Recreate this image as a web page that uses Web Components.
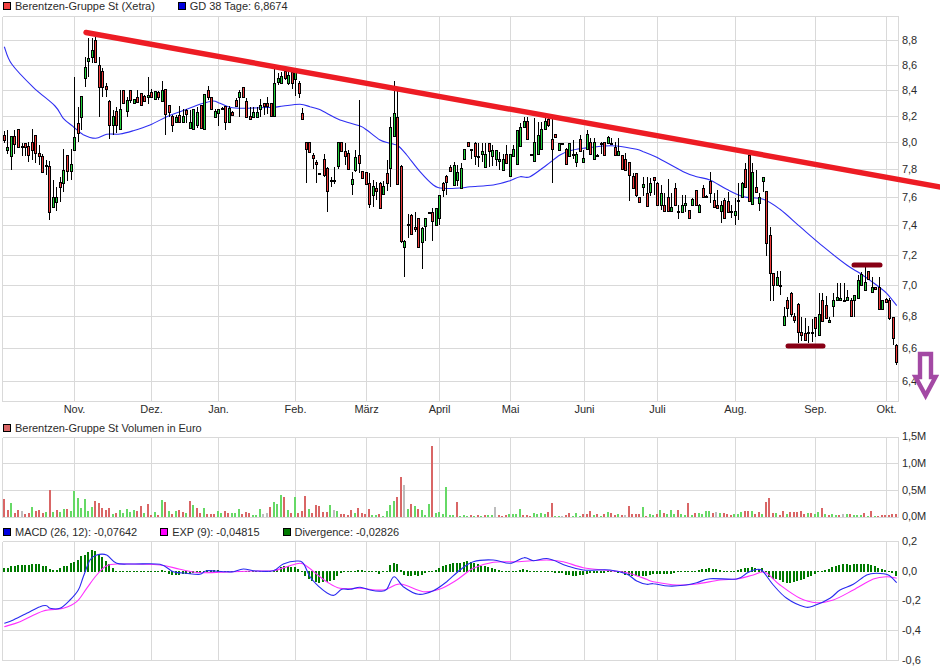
<!DOCTYPE html>
<html lang="de">
<head>
<meta charset="utf-8">
<title>Berentzen-Gruppe St</title>
<style>
  body { margin: 0; background: #fff; color: #2b2b2b; font: 11px "Liberation Sans", Arial, sans-serif; }
  main { display: flex; flex-direction: column; width: 940px; height: 666px; overflow: hidden; }
</style>
</head>
<body>
<main>
  <stock-legend rows="12">
    <legend-item color="#f04040">Berentzen-Gruppe St (Xetra)</legend-item>
    <legend-item color="#0000e0">GD 38 Tage: 6,8674</legend-item>
  </stock-legend>
  <price-chart></price-chart>
  <stock-legend rows="9">
    <legend-item color="#d96666">Berentzen-Gruppe St Volumen in Euro</legend-item>
  </stock-legend>
  <volume-chart></volume-chart>
  <stock-legend rows="9">
    <legend-item color="#0000e0">MACD (26, 12): -0,07642</legend-item>
    <legend-item color="#ff00ff">EXP (9): -0,04815</legend-item>
    <legend-item color="#007a00">Divergence: -0,02826</legend-item>
  </stock-legend>
  <macd-chart></macd-chart>
</main>

<script>
// all values below are read off the chart: x y pairs at 3x, with the crop origin in front
const MONTHS = [["Nov.",74.5],["Dez.",151.5],["Jan.",218.5],["Feb.",295.5],["März",366.5],["April",439.5],["Mai",510.5],["Juni",584.5],["Juli",657.5],["Aug.",735.5],["Sep.",815.5],["Okt.",886.5]];
const GRID_X = MONTHS.map(m => m[1]);

// x high top bottom low colour
const CANDLES = [
[0, 0, `13 392 405 420 428 r,22 390 441 449 462 g,34 408 408 467 510 g,43 390 408 432 462 r,55 388 388 440 440 r,65 430 438 440 468 r,76 430 430 440 468 r,85 425 438 465 485 r,97 388 426 450 480 r,106 405 405 458 488 r,118 435 460 467 495 r,127 462 467 515 515 r,139 480 496 498 525 r,148 483 498 635 660 r,159 540 590 620 620 g,169 560 592 607 632 g,181 530 547 560 605 r,190 448 511 550 575 g,202 465 465 513 542 r,214 448 492 513 540 g,223 232 412 449 449 g,235 320 370 398 425 r,244 289 289 352 390 g,256 170 202 235 262 g,265 113 175 183 230 g,277 113 150 170 190 g,286 110 120 185 185 r,298 172 196 260 350 r,307 205 213 262 290 r,319 250 258 266 290 r,328 300 304 374 418 r,340 330 349 376 406 g,349 320 333 374 400 r,361 270 328 388 388 g,370 270 271 310 310 r,382 290 300 332 350 g,391 270 271 300 310 r,403 296 298 308 310 g,412 270 291 306 308 r,424 278 278 316 316 r,433 285 288 302 305 r,445 232 286 292 312 g,454 268 277 291 295 r,466 272 274 298 298 g,475 272 276 290 300 r,487 243 270 302 302 g,496 268 268 343 406 r,508 316 316 335 352 r,517 345 348 376 395 r,529 345 350 366 368 g,538 318 345 366 368 r,550 328 348 365 368 g,559 328 330 342 368 r,571 330 366 383 385 g,580 328 328 388 390 g,592 320 337 374 385 g,604 316 316 383 385 r,613 283 283 388 390 g,625 258 270 290 300 r,634 290 290 328 328 r,646 328 332 350 352 g,655 328 328 338 378 g,667 320 325 328 330 r,676 318 318 365 390 r,688 318 325 367 370 g,697 333 337 344 346 r,709 295 300 318 320 r,718 270 277 290 350 g,730 262 262 290 290 r,739 295 304 350 352 r,751 320 348 356 358 r,760 320 337 350 352 g,772 320 337 352 354 g,781 297 316 326 350 g,793 308 310 318 345 r,802 292 310 317 342 r,814 310 310 349 350 r,823 207 250 349 350 g,835 218 235 245 255 g,844 216 229 250 250 g,856 210 214 235 240 r,865 210 226 250 255 g,877 205 217 250 268 r,886 210 217 236 288 g,898 243 250 278 293 r,907 325 340 356 360 r,919 425 425 448 550 r,928 425 425 455 458 r,940 458 466 475 508 r,949 480 485 493 550 r,958 519 520 521 522 r`],
[320, 60, `13 282 298 344 350 r,22 320 325 392 455 r,34 352 360 362 382 r,43 320 360 362 372 r,55 247 247 318 328 g,64 247 247 272 272 r,76 248 272 288 315 r,85 270 280 328 330 r,97 335 358 371 405 g,106 270 292 330 335 g,118 120 286 308 340 r,127 332 332 353 355 r,139 337 337 372 372 r,148 340 370 433 444 r,160 360 379 406 440 g,169 365 385 392 420 r,181 365 370 445 445 r,190 362 379 401 403 g,202 300 340 370 392 r,211 172 202 325 380 g,223 63 160 228 228 g,232 90 172 372 372 r,244 315 318 542 548 r,253 540 542 562 650 g,265 462 493 496 535 r,274 462 465 523 525 r,286 455 502 506 515 r,295 475 475 560 562 r,307 500 505 545 627 g,316 475 475 497 542 g,328 455 455 457 458 r,337 445 455 482 542 r,349 445 445 495 497 g,358 405 405 475 495 g,370 365 370 390 412 r,379 345 349 365 405 r,391 315 320 332 335 r,403 305 316 375 378 g,412 315 337 360 378 g,424 308 325 383 385 g,433 268 268 296 296 g,445 247 247 257 258 r,454 267 268 268 297 r,466 247 250 287 315 r,475 250 287 292 320 r,487 250 274 281 305 g,496 250 283 320 320 g,508 250 250 274 320 r,517 255 270 287 318 g,529 270 271 296 318 g,538 275 298 303 330 g,550 282 296 329 330 g,559 255 283 308 308 r,571 282 282 349 350 g,580 255 268 288 290 g,592 210 211 313 315 g,601 190 202 257 258 g,613 172 184 200 202 g,622 172 184 238 240 r,634 281 282 284 285 r,643 175 245 304 305 g,655 185 226 283 284 g,664 185 208 268 270 g,676 170 184 208 210 g,685 170 178 196 200 r,697 178 238 268 370 r,706 222 223 232 234 r,718 250 250 271 272 g,727 249 249 251 252 r,739 265 268 313 314 r,748 250 250 287 288 g,760 240 282 284 297 r,769 275 281 305 320 g,781 225 238 274 276 r,790 270 295 307 309 g,802 210 223 268 270 g,811 235 247 283 285 r,823 235 247 298 300 g,832 283 284 286 287 r,844 247 248 250 283 r,853 247 247 285 286 r,865 228 232 248 250 g,874 235 249 251 255 r,886 245 262 284 285 r,895 235 274 284 285 g,907 285 286 328 330 r,916 280 298 330 330 r,928 307 307 344 422 r,940 340 349 385 387 r,949 340 340 406 412 r,958 411 411 425 426 r`],
[640, 130, `8 140 163 170 198 g,20 140 190 228 228 r,31 145 160 186 197 g,43 140 142 150 195 r,52 155 158 224 224 r,64 165 190 224 240 g,73 190 224 243 245 r,85 148 202 243 245 r,94 190 232 243 245 g,106 160 175 224 226 r,115 225 243 245 267 r,127 195 224 245 247 g,136 195 218 225 245 g,148 240 241 265 267 r,157 204 206 224 226 g,169 180 181 226 228 r,178 222 224 245 247 g,190 165 175 202 204 r,199 196 197 199 205 r,211 127 153 190 220 r,223 190 211 232 234 r,232 180 226 233 235 r,244 212 224 244 278 g,253 205 211 263 265 r,265 185 213 245 247 r,274 225 244 246 265 r,286 205 244 254 285 g,295 160 210 212 270 r,307 155 160 202 204 g,316 100 118 172 174 r,328 75 75 214 216 r,337 98 127 223 225 g,349 120 172 185 187 r,358 190 202 218 242 g,370 140 140 154 186 g,379 184 184 340 378 r,391 292 316 430 512 r,400 430 430 466 513 r,412 424 442 466 468 g,421 424 465 467 495 r,433 530 559 586 588 g,442 500 511 535 560 r,454 487 488 553 562 r,463 550 559 569 580 r,475 520 521 607 640 r,484 560 607 616 632 r,496 565 610 631 632 r,505 588 607 609 640 r,517 568 605 609 635 r,526 562 562 595 622 r,538 488 553 616 618 g,547 488 511 574 576 r,559 498 526 565 567 r,568 560 570 577 579 g,580 488 511 527 560 g,592 458 502 511 512 g,601 458 505 511 512 g,613 460 509 511 512 g,622 480 502 511 512 g,634 505 511 559 560 r,643 495 496 509 560 g,655 435 451 503 505 g,664 425 433 466 468 g,676 412 457 480 482 g,685 424 424 448 450 r,697 440 470 485 487 g,706 470 470 478 480 r,718 440 470 536 538 r,727 510 511 536 538 g,739 505 508 515 517 r,748 505 511 563 569 r,760 560 562 625 645 r,769 642 644 695 705 r`]
];

// volume bars: colour + height at 3x
const VOLUME = [
[4.3, 319.3, "r54 r21 g42 r12 r21 s18 r10 r12 g30 r18 r21 r12 g15 r81 g14 r21 g15 g24 r24 g18 g78 g57 g27 g54 g18 g30 r48 r42 r27 r21 r27 g9 r11 g21 g12 g24 g15 g21 r18 r33 g12 r39 r6 g15 r6 g51 r45 g18 r9 g18 r21 r15 g12 r48 g36 r27 r12 g27 r9 r9 r9 g18 g12 r18 r12 g12 g12 g24 r9 r15 r12 g6 g6 g24 s9 s12 r30 g45 g39 g66 r60 g21 r12 g60 r12 r18 r63 g24 r12 r36 r33"],
[323.3, 639.3, "r15 r15 g36 s21 g18 r9 r9 r6 r21 g12 r27 r12 r9 r24 g6 g6 r9 g3 g18 g36 g48 r60 r120 s96 g24 r39 g33 r24 g21 g6 g39 r213 g12 g15 g9 g90 g6 g6 r45 g3 g6 g3 r6 g3 r6 g3 r6 g6 g6 s30 r6 r3 r6 g9 g9 g9 g24 r6 r6 r3 g12 g9 g12 g9 r15 r42 g3 g3 s3 r6 r12 g3 g12 g3 r9 r9 r18 g6 r9 g3 r9 g15 r12 r6 g9 r6 s6 r33 r9 r9 r9"],
[642.7, 895.7, "g30 r3 g9 g6 r9 g21 r12 g9 g21 g9 r21 g9 g6 r42 g6 r12 g12 g9 g18 g18 r12 s15 g12 r12 r9 r6 g9 g9 g15 r18 r18 g18 r9 r15 g9 r45 r57 r12 g12 r6 r18 g9 r15 r15 r15 r18 r9 g12 r12 g9 g15 r27 g9 r6 g9 g6 r6 s9 g9 r9 g6 g6 g6 r12 g3 r18 g3 r3 r6 r6 r6 r9 r9"]
];

// MACD divergence bars: height at 3x, negative below the zero line
const DIVERGENCE = [
[4.3, 319.3, "12 12 18 18 21 21 21 21 24 24 24 18 18 9 6 6 12 18 18 27 30 36 48 51 60 66 63 54 45 33 24 12 3 3 2 2 2 2 3 -3 -3 2 2 2 2 6 -3 -9 -12 -12 -12 -9 -9 -9 -6 -6 -6 3 6 6 6 6 3 2 2 2 2 2 3 3 2 2 2 2 2 2 2 3 9 15 18 18 15 15 9 3 -15 -24 -30 -33 -36"],
[323.3, 639.3, "-33 -33 -30 -27 -15 -6 -3 -3 -3 3 6 6 -2 -2 -3 -3 -9 -3 3 20 28 24 6 -12 -15 -15 -12 -15 -12 -6 -2 3 6 12 18 21 24 27 27 27 30 33 30 27 24 18 18 15 12 9 6 3 2 2 2 3 6 9 6 2 2 2 2 3 3 -3 -6 -6 -6 -12 -12 -15 -15 -12 -12 -9 -6 -6 -6 -6 -6 -3 -2 -3 -6 -6 -12 -12 -15 -15 -15"],
[642.7, 895.7, "-15 -15 -12 -9 -9 -9 -9 -9 -9 -6 -3 -2 -2 -2 3 3 6 9 9 12 9 9 6 3 3 3 3 6 9 12 12 15 12 9 12 -3 -18 -24 -24 -27 -33 -36 -36 -33 -30 -27 -24 -18 -15 -9 -2 3 6 9 15 18 21 24 24 21 24 24 24 24 24 21 18 12 9 6 3 -6 -15"]
];

// lines: crop origin, then x y pairs at 3x
const MA_LINE = [
[0, 0, "13 140 35 192 100 262 165 318 190 355 220 380 250 404 287 415 320 403 360 402 400 392 450 375 500 350 540 335 580 320 610 310 640 303 660 310 690 322 730 325 780 323 820 322 850 318 900 313 930 320 957 328"],
[320, 60, "20 160 60 180 120 198 140 210 180 240 210 250 235 258 260 285 300 335 340 375 370 385 430 383 450 380 520 375 570 362 600 350 630 350 680 315 720 285 750 272 790 265 850 258 890 258 950 268"],
[640, 130, "10 65 50 82 130 125 170 140 210 150 260 178 310 200 370 208 420 238 480 290 550 350 620 405 660 430 700 458 740 490 770 527"]
];
const MACD_LINE = [
[0, 400, "13 670 40 660 80 640 120 620 140 617 150 625 180 625 210 600 235 570 250 530 270 480 290 465 320 465 350 490 400 492 480 493 520 515 560 520 600 523 620 512 670 515 700 515 730 507 770 513 820 512 850 492 890 483 910 490 930 530 957 560"],
[320, 400, "20 578 42 586 65 568 90 568 120 562 150 570 180 574 200 568 222 530 250 560 295 583 340 572 380 545 420 510 460 485 520 480 570 490 612 473 640 482 685 476 740 497 790 510 870 510 920 522 950 543"],
[640, 400, "20 553 40 551 85 558 130 556 170 548 210 536 290 537 320 520 340 511 365 511 400 555 440 595 495 621 525 616 570 595 600 570 640 553 680 525 710 520 745 525 770 548"]
];
const EXP_LINE = [
[0, 400, "13 680 60 665 130 633 190 625 230 605 260 565 290 525 320 497 360 492 480 495 540 508 600 518 700 515 760 513 820 512 880 494 910 492 957 528"],
[320, 400, "20 545 60 565 120 565 190 570 240 552 310 575 360 567 410 540 460 505 520 487 590 485 680 480 730 485 790 503 870 512 920 518 950 527"],
[640, 400, "20 538 40 545 110 555 170 552 240 540 290 537 340 525 375 517 420 555 480 595 530 608 580 600 640 570 700 537 740 530 770 535"]
];

// catmull-rom through the read points, the original lines are moving averages
function smoothPath(parts) {
    const pts = [];
    parts.forEach(([ox, oy, list]) => {
        const n = list.split(" ").map(Number);
        for (let i = 0; i < n.length; i += 2) {
            pts.push([ox + n[i] / 3, oy + n[i + 1] / 3]);
        }
    });
    let d = `M${pts[0][0].toFixed(1)} ${pts[0][1].toFixed(1)}`;
    for (let i = 0; i < pts.length - 1; i++) {
        const p0 = pts[Math.max(i - 1, 0)], p1 = pts[i], p2 = pts[i + 1], p3 = pts[Math.min(i + 2, pts.length - 1)];
        const c1 = [p1[0] + (p2[0] - p0[0]) / 6, p1[1] + (p2[1] - p0[1]) / 6];
        const c2 = [p2[0] - (p3[0] - p1[0]) / 6, p2[1] - (p3[1] - p1[1]) / 6];
        d += `C${c1[0].toFixed(1)} ${c1[1].toFixed(1)} ${c2[0].toFixed(1)} ${c2[1].toFixed(1)} ${p2[0].toFixed(1)} ${p2[1].toFixed(1)}`;
    }
    return d;
}

function spread(parts, fn) {
    let out = "";
    parts.forEach(([x0, x1, list]) => {
        const items = list.split(" ");
        items.forEach((item, i) => {
            out += fn(x0 + (x1 - x0) * i / (items.length - 1), item);
        });
    });
    return out;
}

// shared frame for the three panels: white box, grid, axis labels
class ChartPanel extends HTMLElement {
    constructor() {
        super();
        this.attachShadow({mode: "open"});
        const c = this.config();
        this.shadowRoot.innerHTML = `
        <style>
        :host { display: block; width: 940px; height: ${c.bottom - c.top}px; flex: none; }
        svg { display: block; }
        text { font: 11px "Liberation Sans", Arial, sans-serif; fill: #2b2b2b; letter-spacing: -0.06px; }
        .grid { stroke: #d9d9d9; stroke-width: 1; shape-rendering: crispEdges; }
        </style>
        <svg width="940" height="${c.bottom - c.top}" viewBox="0 ${c.top} 940 ${c.bottom - c.top}">
            ${this.frame(c)}
            ${this.content()}
        </svg>`;
    }

    frame(c) {
        const l = 2.5, r = 898.5;
        let s = "";
        c.rows.forEach(y => {
            s += `<line class="grid" x1="${l}" x2="${r}" y1="${y}" y2="${y}"/>`;
        });
        [l, ...GRID_X, r].forEach(x => {
            s += `<line class="grid" x1="${x}" x2="${x}" y1="${c.plotTop}" y2="${c.plotBottom}"/>`;
        });
        c.labels.forEach(([t, y]) => {
            s += `<text x="902" y="${y + 3}">${t}</text>`;
        });
        return s;
    }
}

class PriceChart extends ChartPanel {
    config() {
        const rows = [16.5, 40.5, 65.5, 90.5, 116.5, 142.5, 169.5, 197.5, 225.5, 255.5, 285.5, 316.5, 348.5, 381.5, 401.5];
        const labels = ["8,8","8,6","8,4","8,2","8,0","7,8","7,6","7,4","7,2","7,0","6,8","6,6","6,4"].map((t, i) => [t, rows[i + 1]]);
        return {top: 12, bottom: 422, plotTop: 16.5, plotBottom: 401.5, rows, labels};
    }

    candle(x, h, t, b, l, col) {
        const px = Math.round(x) + 0.5;
        const top = Math.round(t) + 0.5;
        const bot = Math.max(Math.round(b) + 0.5, top + 1);
        const fill = col === "r" ? "#ee3b3b" : "#22d03a";
        return `<line x1="${px}" x2="${px}" y1="${Math.round(h)}" y2="${Math.round(l)}" stroke="#000"/>` +
            `<rect x="${px - 1}" y="${top}" width="2" height="${bot - top}" fill="${fill}" stroke="#000"/>`;
    }

    content() {
        let s = `<path d="${smoothPath(MA_LINE)}" fill="none" stroke="#2f2ff2" stroke-width="1.1"/>`;
        s += `<g shape-rendering="crispEdges">`;
        CANDLES.forEach(([ox, oy, list]) => {
            list.split(",").forEach(row => {
                const p = row.split(" ");
                s += this.candle(ox + p[0] / 3, oy + p[1] / 3, oy + p[2] / 3, oy + p[3] / 3, oy + p[4] / 3, p[5]);
            });
        });
        s += `</g>`;
        // hand-drawn marks on top of the chart
        s += `<line x1="86" y1="32.5" x2="942" y2="187.3" stroke="#ed1c24" stroke-width="5.4" stroke-linecap="round"/>
            <line x1="854" y1="265" x2="880" y2="265" stroke="#880015" stroke-width="5" stroke-linecap="round"/>
            <line x1="788" y1="346" x2="823" y2="346" stroke="#880015" stroke-width="5" stroke-linecap="round"/>
            <path d="M920 354H931V377H935.5L925.6 395.5L915.5 377H920Z" fill="none" stroke="#a349a4" stroke-width="4.4"/>`;
        MONTHS.forEach(([t, x]) => {
            s += `<text x="${x}" y="413" text-anchor="middle">${t}</text>`;
        });
        return s;
    }
}

class VolumeChart extends ChartPanel {
    config() {
        return {
            top: 431, bottom: 526, plotTop: 437.5, plotBottom: 517.5,
            rows: [437.5, 463.5, 490.5, 517.5],
            labels: [["1,5M", 437], ["1,0M", 463.5], ["0,5M", 490.5], ["0,0M", 517]]
        };
    }

    content() {
        const colors = {r: "#d96666", g: "#66d966", s: "#bdbdbd"};
        const bars = spread(VOLUME, (x, item) => {
            const h = Math.max(1, Math.round(item.slice(1) / 3));
            return `<rect x="${Math.round(x) - 1}" y="${517 - h}" width="2" height="${h}" fill="${colors[item[0]]}"/>`;
        });
        return `<g shape-rendering="crispEdges">${bars}</g>`;
    }
}

class MacdChart extends ChartPanel {
    config() {
        return {
            top: 535, bottom: 666, plotTop: 541.5, plotBottom: 660.5,
            rows: [541.5, 600.5, 630.5, 660.5],
            labels: [["0,2", 542], ["0,0", 571.5], ["-0,2", 600.5], ["-0,4", 630.5], ["-0,6", 660.5]]
        };
    }

    content() {
        const bars = spread(DIVERGENCE, (x, item) => {
            const v = item / 3;
            const h = Math.max(1, Math.round(Math.abs(v)));
            const y = v > 0 ? 572 - h : 571;
            return `<rect x="${Math.round(x) - 1}" y="${y}" width="2" height="${h}" fill="#007a00"/>`;
        });
        return `<g shape-rendering="crispEdges">${bars}</g>
            <path d="${smoothPath(EXP_LINE)}" fill="none" stroke="#ff30ff" stroke-width="1.1"/>
            <path d="${smoothPath(MACD_LINE)}" fill="none" stroke="#2a2af0" stroke-width="1.1"/>`;
    }
}

class StockLegend extends HTMLElement {
    constructor() {
        super();
        this.attachShadow({mode: "open"});
        this.shadowRoot.innerHTML = `
        <style>
        :host { display: flex; flex: none; height: ${this.getAttribute("rows")}px; padding-left: 3px; align-items: flex-start; }
        </style>
        <slot></slot>`;
    }
}

class LegendItem extends HTMLElement {
    constructor() {
        super();
        this.attachShadow({mode: "open"});
        this.shadowRoot.innerHTML = `
        <style>
        :host { display: flex; align-items: center; gap: 4px; height: 12px; margin-right: 23px; line-height: 12px; letter-spacing: -0.03px; white-space: nowrap; }
        .box { width: 6px; height: 6px; border: 1px solid #000; background: ${this.getAttribute("color")}; }
        </style>
        <span class="box"></span><slot></slot>`;
    }
}

customElements.define("legend-item", LegendItem);
customElements.define("stock-legend", StockLegend);
customElements.define("price-chart", PriceChart);
customElements.define("volume-chart", VolumeChart);
customElements.define("macd-chart", MacdChart);
</script>
</body>
</html>
